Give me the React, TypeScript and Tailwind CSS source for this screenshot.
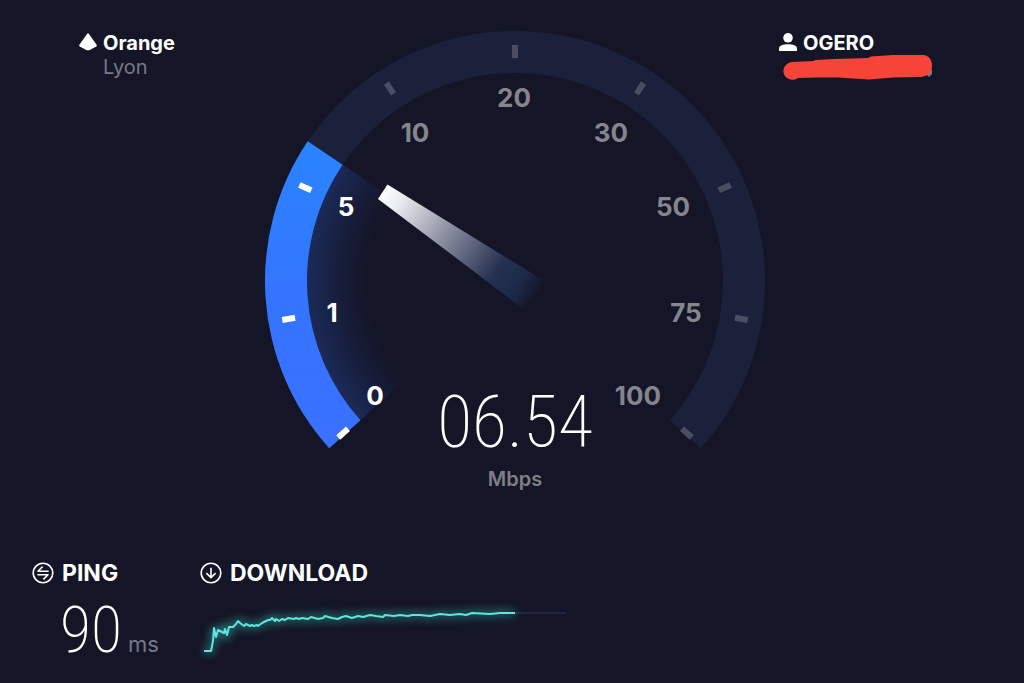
import React from 'react';

const CX = 250;
const CY = 250;
const OUTER = 250;
const INNER = 208;

const ticks = [
    { angle: -131.5, active: true },
    { angle: -99.5, active: true },
    { angle: -66, active: true },
    { angle: -33, active: false },
    { angle: 0, active: false },
    { angle: 33, active: false },
    { angle: 66, active: false },
    { angle: 99.5, active: false },
    { angle: 131.5, active: false },
];

const labels = [
    { text: '0', x: 110, y: 374, active: true },
    { text: '1', x: 67, y: 291, active: true },
    { text: '5', x: 81, y: 185, active: true },
    { text: '10', x: 150, y: 111, active: false },
    { text: '20', x: 249, y: 76, active: false },
    { text: '30', x: 346, y: 111, active: false },
    { text: '50', x: 408, y: 185, active: false },
    { text: '75', x: 421, y: 291, active: false },
    { text: '100', x: 373, y: 374, active: false },
];

// angles are in degrees, clockwise from the top of the dial
function point(radius: number, angle: number) {
    const rad = (angle * Math.PI) / 180;
    return `${(CX + radius * Math.sin(rad)).toFixed(2)} ${(CY - radius * Math.cos(rad)).toFixed(2)}`;
}

function band(from: number, to: number, outer: number, inner: number) {
    const large = to - from > 180 ? 1 : 0;
    return [
        `M${point(outer, from)}`,
        `A${outer} ${outer} 0 ${large} 1 ${point(outer, to)}`,
        `L${point(inner, to)}`,
        `A${inner} ${inner} 0 ${large} 0 ${point(inner, from)}`,
        'Z',
    ].join(' ');
}

function Dial() {
    return (
        <svg viewBox="0 0 500 420" className="block w-full" role="img" aria-label="Speed gauge">
            <defs>
                <linearGradient id="progress" x1="0" y1="110" x2="0" y2="417" gradientUnits="userSpaceOnUse">
                    <stop offset="0" stopColor="#2a85ff" />
                    <stop offset="0.5" stopColor="#3474ff" />
                    <stop offset="1" stopColor="#3a70ff" />
                </linearGradient>
                <radialGradient id="glow" cx={CX} cy={CY} r={INNER} gradientUnits="userSpaceOnUse">
                    <stop offset="0.7" stopColor="#2b60d8" stopOpacity="0" />
                    <stop offset="0.84" stopColor="#2b60d8" stopOpacity="0.11" />
                    <stop offset="1" stopColor="#2b60d8" stopOpacity="0.28" />
                </radialGradient>
                <linearGradient id="needle" x1="118" y1="161" x2="272" y2="266" gradientUnits="userSpaceOnUse">
                    <stop offset="0" stopColor="#ffffff" />
                    <stop offset="0.12" stopColor="#e6e7ec" />
                    <stop offset="0.4" stopColor="#8d90a2" />
                    <stop offset="0.74" stopColor="#26304f" />
                    <stop offset="0.88" stopColor="#1b2a4b" />
                    <stop offset="1" stopColor="#141526" />
                </linearGradient>
            </defs>
            <path d={band(-132, 132, OUTER, INNER)} fill="#1c213b" />
            <path d={band(-132, -56, INNER, 120)} fill="url(#glow)" />
            <path d={band(-132, -56, OUTER, INNER)} fill="url(#progress)" />
            {ticks.map((tick) => (
                <rect
                    key={tick.angle}
                    x={CX - 3}
                    y={14}
                    width={6}
                    height={13}
                    fill={tick.active ? '#ffffff' : '#4b4e62'}
                    transform={`rotate(${tick.angle} ${CX} ${CY})`}
                />
            ))}
            <g className="font-['Inter',sans-serif] text-[26px] font-bold" textAnchor="middle">
                {labels.map((label) => (
                    <text key={label.text} x={label.x} y={label.y} fill={label.active ? '#ffffff' : '#85858e'}>
                        {label.text}
                    </text>
                ))}
            </g>
            <path d="M122.5 153.5 L281 251 L260 279 L113 168 Z" fill="url(#needle)" />
        </svg>
    );
}

function ServerIcon() {
    return (
        <svg viewBox="0 0 18 18" className="mt-0.5 size-[18px] shrink-0" fill="#ffffff" aria-hidden="true">
            <path d="M8.2 0.8 Q9 -0.2 9.8 0.8 L17.6 11.8 Q18.2 12.8 17.2 13.6 L10.8 16.9 Q9 17.6 7.2 16.9 L0.8 13.6 Q-0.2 12.8 0.4 11.8 Z" />
        </svg>
    );
}

function UserIcon() {
    return (
        <svg viewBox="0 0 18 18" className="mt-0.5 size-[18px] shrink-0" fill="#ffffff" aria-hidden="true">
            <circle cx="9" cy="4.8" r="4.8" />
            <path d="M0 18 V15.5 C0 12.5 4.5 11.3 9 11.3 C13.5 11.3 18 12.5 18 15.5 V18 Z" />
        </svg>
    );
}

function PingIcon() {
    return (
        <svg viewBox="0 0 22 22" className="size-[22px]" fill="none" stroke="#ffffff" strokeWidth="1.6" strokeLinejoin="round" aria-hidden="true">
            <circle cx="11" cy="11" r="9.8" />
            <path d="M10.6 4.6 L6 9.2 H16.6 M5.4 12.8 H16 L11.4 17.4" />
        </svg>
    );
}

function DownloadIcon() {
    return (
        <svg viewBox="0 0 22 22" className="size-[22px]" fill="none" stroke="#ffffff" strokeWidth="1.6" aria-hidden="true">
            <circle cx="11" cy="11" r="9.8" />
            <path d="M11 5.8 V15.6 M6.4 11.2 L11 15.6 L15.6 11.2" />
        </svg>
    );
}

const trace =
    '4,50 11,50 13,40 14,27 16,36 18,29 20,30 24,32 25,28 27,34 29,26 33,26 36,23 38,20 40,22 44,25 46,23 50,25 52,24 54,25 57,24 58,25 62,22 66,20 68,19 70,19 72,17 75,20 76,18 79,20 82,18 85,19 88,17 94,18 96,17 99,18 102,17 108,18 111,16 118,18 123,17 125,15 132,17 138,18 142,16 146,15 152,17 158,15 163,16 170,14 176,15 183,16 185,14 194,15 200,14 208,15 212,14 220,14 230,15 240,13 250,14 260,13 266,14 272,12 290,13 300,12 315,12';

function DownloadChart() {
    return (
        <svg viewBox="0 0 366 64" className="block w-[366px] overflow-visible" fill="none" role="img" aria-label="Download speed over time">
            <defs>
                <filter id="blur" x="-10%" y="-60%" width="120%" height="220%">
                    <feGaussianBlur stdDeviation="5" />
                </filter>
            </defs>
            <path d="M315 12 H366" stroke="#1f2645" strokeWidth="2" />
            <polyline points={trace} stroke="#38c9bd" strokeWidth="5" opacity="0.6" filter="url(#blur)" />
            <polyline points={trace} stroke="#5fe6da" strokeWidth="2" strokeLinejoin="round" />
        </svg>
    );
}

export default function App() {
    return (
        <div className="min-h-screen bg-[#141526] font-['Inter',sans-serif] text-white">
            <main className="grid grid-cols-[1fr_500px_1fr] pt-[31px] pl-1.5">
                <section className="flex gap-1.5 pl-[73px]">
                    <ServerIcon />
                    <div>
                        <h2 className="text-xl leading-6 font-bold">Orange</h2>
                        <p className="text-xl leading-6 text-[#77788c]">Lyon</p>
                    </div>
                </section>

                <section className="relative pb-10">
                    <Dial />
                    <div className="absolute inset-x-0 bottom-0 flex flex-col items-center gap-3">
                        <p className="font-['Roboto_Condensed','Open_Sans_Condensed',Roboto,sans-serif] text-[72px] leading-[64px] font-extralight">06.54</p>
                        <p className="text-xl leading-6 font-semibold text-[#7f7f89]">Mbps</p>
                    </div>
                </section>

                <section className="flex gap-1.5 pl-3.5">
                    <UserIcon />
                    <div>
                        <h2 className="text-xl leading-6 font-bold">OGERO</h2>
                        <svg viewBox="0 0 150 26" className="-ml-5 block w-[150px]" aria-hidden="true">
                            <path d="M144 20 L149 14 V19 L146 22 Z" fill="#77788c" />
                            <path d="M9 7 L31 6 L32 5 L52 4 L85 3 L88 1.5 L110 0 H140 C146 0 149 5 149 11 C149 18 145 21 138 22 L110 22.5 L86 24.5 L55 22.5 L32 22.5 L15 23 C11 26 5 25 2 21 C-2 15 2 8 9 7 Z" fill="#f64438" />
                        </svg>
                    </div>
                </section>
            </main>

            <footer className="grid grid-cols-[168px_1fr] pt-[70px] pl-8">
                <section>
                    <h3 className="flex items-center gap-2 text-[23px] leading-6 font-bold">
                        <PingIcon />
                        PING
                    </h3>
                    <p className="flex items-baseline gap-1.5 pl-7">
                        <span className="font-['Roboto_Condensed','Open_Sans_Condensed',Roboto,sans-serif] text-[64px] leading-[92px] font-extralight">90</span>
                        <span className="text-[22px] text-[#77788c]">ms</span>
                    </p>
                </section>
                <section>
                    <h3 className="flex items-center gap-2 text-[23px] leading-6 font-bold">
                        <DownloadIcon />
                        DOWNLOAD
                    </h3>
                    <div className="pt-4">
                        <DownloadChart />
                    </div>
                </section>
            </footer>
        </div>
    );
}
